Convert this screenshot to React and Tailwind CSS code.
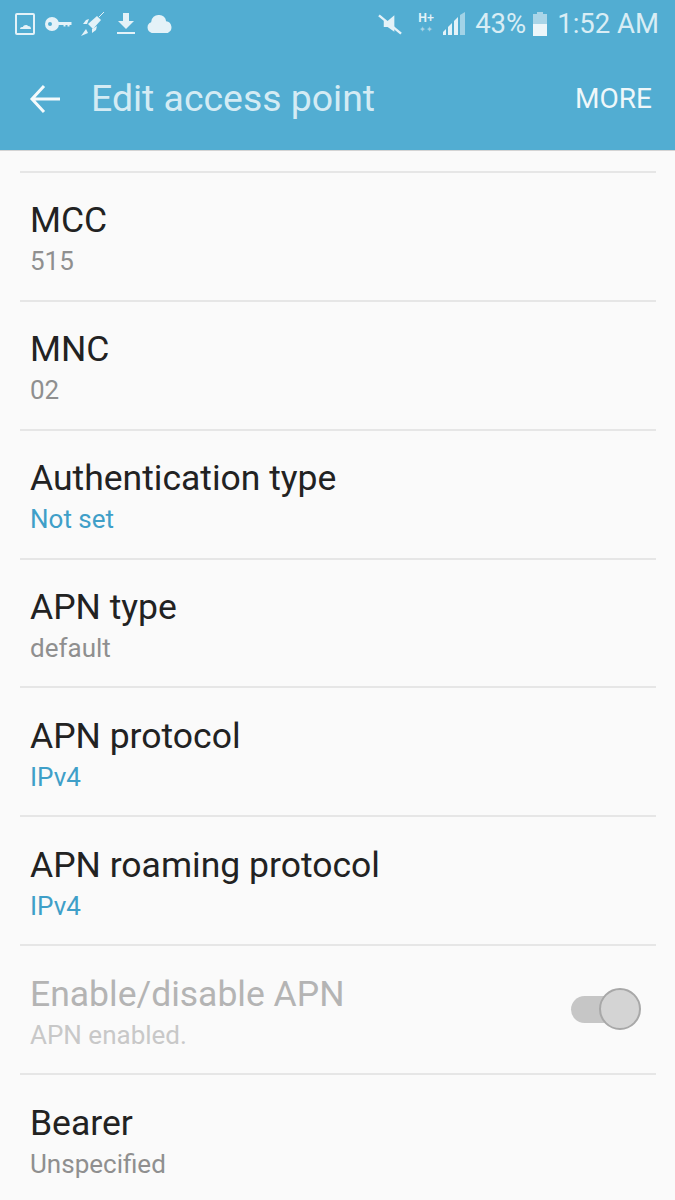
const rows = [
  { t: "MCC", s: "515", c: "text-[#8f8f8f]" },
  { t: "MNC", s: "02", c: "text-[#8f8f8f]" },
  { t: "Authentication type", s: "Not set", c: "text-[#3f9fc8]" },
  { t: "APN type", s: "default", c: "text-[#8f8f8f]" },
  { t: "APN protocol", s: "IPv4", c: "text-[#3f9fc8]" },
  { t: "APN roaming protocol", s: "IPv4", c: "text-[#3f9fc8]" },
  { t: "Enable/disable APN", s: "APN enabled.", c: "text-[#c8c8c8]", off: true },
  { t: "Bearer", s: "Unspecified", c: "text-[#8f8f8f]" },
];

function StatusLeft() {
  return (
    <div className="flex items-center text-[#e4f2f8]">
      <svg width="20" height="22" viewBox="0 0 20 22" fill="none" stroke="currentColor">
        <rect x="1" y="1" width="18" height="20" strokeWidth="2" rx="1" />
        <path d="M5 16c0-2 2-2 3-2 0-2 4-3 5-1 2 0 3 1 3 3z" fill="currentColor" stroke="none" />
      </svg>
      <svg width="27" height="16" viewBox="0 0 27 16" fill="currentColor" className="ml-[10px]">
        <path fillRule="evenodd" d="M7 1a7 7 0 1 0 0 14 7 7 0 0 0 0-14zM5 6a2 2 0 1 1 0 4 2 2 0 0 1 0-4z" />
        <path d="M13 6h13.500v3h-2v1.500h-2V9h-2v1.500h-2V9H13z" />
      </svg>
      <svg width="25" height="26" viewBox="0 0 25 26" fill="currentColor" className="ml-[8px]">
        <path d="M17 5l4 4-8 9-5-5z" />
        <path d="M19 6l5-5" stroke="currentColor" strokeWidth="1" />
        <path d="M9 8l-3 1-3 4 4 0zM17 15l-1 4-4 3 0-4z" />
        <path d="M6 18l-5 7 7-3z" />
      </svg>
      <svg width="18" height="24" viewBox="0 0 18 24" fill="currentColor" className="ml-[12px]">
        <path d="M6 1h6v8h5l-8 8-8-8h5z" />
        <rect x="0" y="20" width="18" height="2" />
      </svg>
      <svg width="28" height="20" viewBox="0 0 25 18" fill="currentColor" className="ml-[11px]">
        <path d="M5 17a5 5 0 0 1-.5-9.500A6.500 6.500 0 0 1 12 1a6 6 0 0 1 6 5.500A5.500 5.500 0 0 1 19.500 17z" />
      </svg>
    </div>
  );
}

function StatusRight() {
  return (
    <div className="flex items-center text-[#e4f2f8]">
      <svg width="25" height="24" viewBox="0 0 26 24" fill="currentColor">
        <path d="M6 9h4l7-6v17l-7-5H6z" />
        <path d="M1 3l23 19" stroke="currentColor" strokeWidth="2.500" />
      </svg>
      <div className="ml-[14px] flex w-[18px] flex-col items-center">
        <span className="text-[12px] leading-[13px] font-bold [font-family:'Liberation_Sans',sans-serif]">H+</span>
        <span className="text-[8px] leading-[10px] opacity-60">✦✦</span>
      </div>
      <svg width="24" height="26" viewBox="0 0 24 26" fill="currentColor" className="ml-[7px]">
        <path d="M1 21l3-3v6H1z" />
        <path d="M6 16l4-4v12H6z" />
        <path d="M12 10l4-4v18h-4z" />
        <path d="M18 4l5-3v23h-5z" opacity="0.55" />
      </svg>
      <span className="ml-[9px] text-[27.500px] leading-none text-[#d9edf5]">43%</span>
      <svg width="16" height="24" viewBox="0 0 16 24" className="ml-[6px]">
        <path d="M5 0h6v2h4v22H1V2h4z" fill="#a9d5e8" />
        <rect x="1" y="12" width="14" height="12" fill="#ecf6fa" />
      </svg>
      <span className="ml-[9px] text-[27.500px] leading-none text-[#d9edf5]">1:52 AM</span>
    </div>
  );
}

export default function App() {
  return (
    <div className="flex h-[1200px] w-[675px] flex-col overflow-hidden bg-[#fafafa] [font-family:Roboto,sans-serif]">
      <header className="flex h-[151px] shrink-0 flex-col border-b border-[#d4d4d4] bg-[#52add2]">
        <div className="flex h-[47px] items-center justify-between pr-[16px] pl-[15px]">
          <StatusLeft />
          <StatusRight />
        </div>
        <div className="flex h-[103px] items-center">
          <svg width="32" height="32" viewBox="0 0 32 32" fill="none" stroke="#f4fafc" strokeWidth="3" className="ml-[29px]">
            <path d="M31 16H3M15 3L3 16l12 13" />
          </svg>
          <span className="ml-[30px] text-[37.400px] leading-none text-[#d4ebf4]">Edit access point</span>
          <span className="mr-[23px] ml-auto text-[28px] leading-none text-[#eef7fa]">MORE</span>
        </div>
      </header>
      <div className="mx-[20px] mt-[20px] w-[636px] border-t-2 border-[#e6e6e6]">
        {rows.map((r) => (
          <div key={r.t} className="flex h-[128.860px] items-center border-b-2 border-[#e6e6e6] pr-[21px] pl-[10px] last:border-b-0">
            <div className="flex flex-col pt-[5px]">
              <span className={`text-[35.500px] leading-[40px] ${r.off ? "text-[#b4b4b4]" : "text-[#222222]"}`}>{r.t}</span>
              <span className={`mt-[5px] text-[26px] leading-[32px] ${r.c}`}>{r.s}</span>
            </div>
            {r.off && (
              <div className="relative ml-auto h-[27px] w-[64px] rounded-full bg-[#c6c6c6]">
                <div className="absolute top-[-8px] right-[-6px] h-[42px] w-[42px] rounded-full border-2 border-[#a8a8a8] bg-[#d4d4d4]" />
              </div>
            )}
          </div>
        ))}
      </div>
    </div>
  );
}
